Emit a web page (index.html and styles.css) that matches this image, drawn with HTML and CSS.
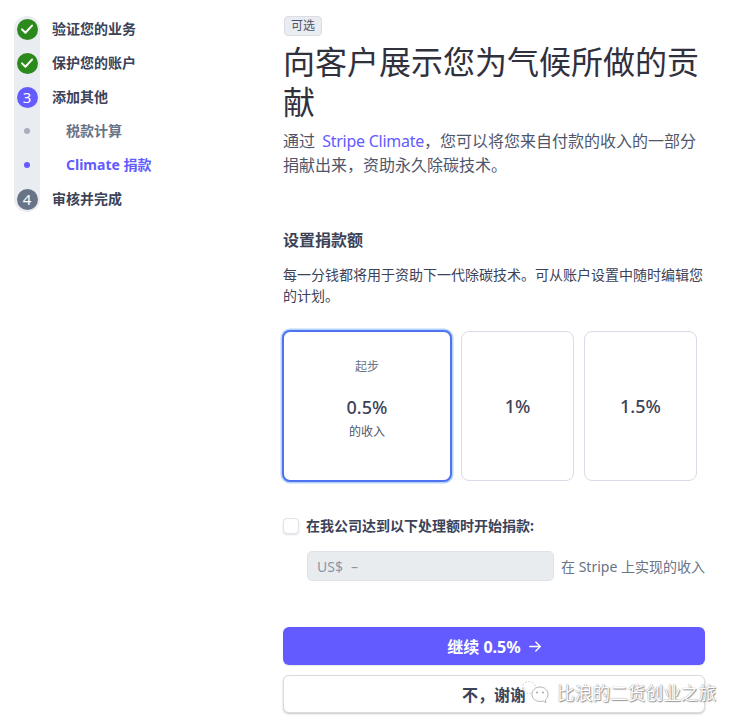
FILE: index.html
```html
<!DOCTYPE html>
<html lang="zh-CN">
<head>
<meta charset="utf-8">
<title>Stripe Climate</title>
<link rel="stylesheet" href="styles.css">
</head>
<body>
<div class="page">
  <nav class="steps">
    <div class="step"><span class="node done"><svg width="14" height="14" viewBox="0 0 14 14"><path d="M2 7.4 5.4 10.8 12 3.6" fill="none" stroke="#fff" stroke-width="2" stroke-linecap="round" stroke-linejoin="round"/></svg></span><span class="label">验证您的业务</span></div>
    <div class="step"><span class="node done"><svg width="14" height="14" viewBox="0 0 14 14"><path d="M2 7.4 5.4 10.8 12 3.6" fill="none" stroke="#fff" stroke-width="2" stroke-linecap="round" stroke-linejoin="round"/></svg></span><span class="label">保护您的账户</span></div>
    <div class="step"><span class="node current">3</span><span class="label">添加其他</span></div>
    <div class="step sub"><span class="node-slot"><span class="dot"></span></span><span class="label muted">税款计算</span></div>
    <div class="step sub"><span class="node-slot"><span class="dot active"></span></span><span class="label accent">Climate 捐款</span></div>
    <div class="step"><span class="node todo">4</span><span class="label">审核并完成</span></div>
  </nav>
  <main class="main">
    <span class="badge">可选</span>
    <h1 class="title">向客户展示您为气候所做的贡献</h1>
    <p class="lead">通过 <a class="link">Stripe Climate</a>，您可以将您来自付款的收入的一部分捐献出来，资助永久除碳技术。</p>
    <h2 class="section">设置捐款额</h2>
    <p class="desc">每一分钱都将用于资助下一代除碳技术。可从账户设置中随时编辑您的计划。</p>
    <div class="cards">
      <div class="card selected">
        <span class="card-top">起步</span>
        <span class="pct">0.5%</span>
        <span class="card-sub">的收入</span>
      </div>
      <div class="card plain"><span class="pct">1%</span></div>
      <div class="card plain"><span class="pct">1.5%</span></div>
    </div>
    <div class="check-row"><span class="checkbox"></span><span class="check-label">在我公司达到以下处理额时开始捐款:</span></div>
    <div class="input-row">
      <div class="input"><span>US$</span><span>–</span></div>
      <span class="input-note">在 Stripe 上实现的收入</span>
    </div>
    <button class="btn primary">继续 0.5% <svg class="arrow" width="12" height="11" viewBox="0 0 12 11"><path d="M.7 5.5H11.3M6.8 1l4.5 4.5L6.8 10" fill="none" stroke="#fff" stroke-width="1.3" stroke-linecap="round" stroke-linejoin="round"/></svg></button>
    <button class="btn secondary">不，谢谢</button>
  </main>
</div>
<div class="watermark">
  <svg width="30" height="24" viewBox="0 0 30 24"><ellipse cx="7" cy="6.5" rx="6.5" ry="6" fill="#fff" fill-opacity=".85" stroke="#cfcfcf" stroke-dasharray="2 1.5"/><path d="M18 6c4.6 0 8 3.2 8 7.3 0 2.2-1 4-2.6 5.3l.6 3-3.200-1.600c-.9.3-1.800.400-2.800.400-4.600 0-8-3.200-8-7.100S13.400 6 18 6Z" fill="#fff" stroke="#b4b4b4"/><circle cx="15" cy="11.500" r=".9" fill="#a0a0a0"/><circle cx="21" cy="11.500" r=".9" fill="#a0a0a0"/></svg>
  <span>比浪的二货创业之旅</span>
</div>
</body>
</html>
```

FILE: styles.css
```css
* { box-sizing: border-box; }
html, body { margin: 0; padding: 0; background: #fff; }
body {
  width: 740px;
  height: 725px;
  overflow: hidden;
  position: relative;
  font-family: "Noto Sans", "Noto Sans CJK SC", sans-serif;
  color: #3c4257;
}
.page { display: flex; align-items: flex-start; padding-left: 14px; }

.steps {
  position: relative;
  width: 269px;
  height: 196px;
  flex: none;
  margin-top: 16px;
  display: flex;
  flex-direction: column;
}
.steps::before {
  content: "";
  position: absolute;
  left: 0;
  top: 0;
  bottom: 0;
  width: 26px;
  border-radius: 13px;
  background: #e9ecf0;
}
.step { position: relative; height: 34px; flex: none; display: flex; align-items: center; }
.step:first-child { margin-top: -4px; }
.node, .node-slot {
  width: 21px;
  height: 21px;
  margin: 0 2.5px;
  flex: none;
  display: flex;
  align-items: center;
  justify-content: center;
}
.node {
  border-radius: 50%;
  color: #fff;
  font-size: 15px;
  line-height: 21px;
}
.done { background: #2c8a1c; }
.current { background: #635bff; }
.todo { background: #697386; }
.dot { width: 6px; height: 6px; border-radius: 50%; background: #a9afc0; }
.dot.active { background: #635bff; }
.label {
  margin-left: 12px;
  font-size: 14px;
  font-weight: 700;
  line-height: 18px;
  color: #3c4257;
  white-space: nowrap;
}
.sub .label { margin-left: 26px; }
.label.muted { color: #697386; }
.label.accent { color: #635bff; }

.main { width: 422px; flex: none; display: flex; flex-direction: column; align-items: flex-start; padding-top: 16px; }
.badge {
  height: 20px;
  margin-left: 1px;
  padding: 0 6px;
  font-size: 12px;
  line-height: 18px;
  color: #4f566b;
  background: #e9ecf0;
  border: 1px solid #dadde4;
  border-radius: 4px;
}
.title {
  margin: 6px 0 0;
  font-size: 32px;
  line-height: 40px;
  font-weight: 400;
  color: #30313d;
  width: 100%;
}
.lead {
  margin: 7px 0 0;
  font-size: 16px;
  line-height: 24px;
  color: #4f566b;
  width: 100%;
}
.link { color: #635bff; margin-left: 3px; letter-spacing: -.25px; }
.section {
  margin: 51px 0 0;
  font-size: 16px;
  line-height: 24px;
  font-weight: 700;
  color: #3c4257;
}
.desc {
  margin: 12px 0 0;
  font-size: 14px;
  line-height: 21px;
  color: #3c4257;
  width: 100%;
}
.cards { display: flex; align-items: flex-start; gap: 10px; margin-top: 25px; }
.card {
  height: 150px;
  border-radius: 8px;
  background: #fff;
  display: flex;
  flex-direction: column;
  align-items: center;
}
.plain {
  width: 113px;
  border: 1px solid #d8dce6;
  justify-content: center;
}
.selected {
  width: 170px;
  height: 152px;
  margin: -1px;
  border: 2px solid #4f73f0;
  box-shadow: 0 0 0 1.5px #b3d4fb;
}
.card-top { margin-top: 26px; font-size: 12px; line-height: 18px; color: #697386; }
.pct { font-size: 18px; font-weight: 500; line-height: 24px; color: #3c4257; }
.selected .pct { margin-top: 19px; }
.card-sub { margin-top: 5px; font-size: 12px; line-height: 16px; color: #4f566b; }

.check-row { display: flex; align-items: center; margin-top: 35px; height: 20px; gap: 7px; }
.checkbox {
  width: 16px;
  height: 16px;
  border-radius: 4px;
  background: #fff;
  border: 1px solid #e0e3ea;
  box-shadow: 0 1px 2px rgba(60, 66, 87, .16);
}
.check-label { font-size: 14px; font-weight: 700; line-height: 20px; color: #3c4257; }
.input-row { display: flex; align-items: center; margin: 15px 0 0 24px; gap: 7px; }
.input {
  width: 247px;
  height: 30px;
  background: #e9ecef;
  border: 1px solid #dfe2e8;
  border-radius: 5px;
  padding: 0 9px;
  display: flex;
  align-items: center;
  gap: 8px;
  font-size: 14px;
  color: #8c94a5;
}
.input-note { font-size: 14px; color: #697386; white-space: nowrap; }

.btn {
  width: 422px;
  height: 38px;
  flex: none;
  border-radius: 6px;
  font-family: inherit;
  font-size: 16px;
  font-weight: 700;
  padding: 0;
  display: flex;
  align-items: center;
  justify-content: center;
  gap: 8px;
}
.primary {
  margin-top: 46px;
  background: #635bff;
  color: #fff;
  border: none;
  box-shadow: 0 1px 1px rgba(60, 66, 87, .12);
}
.secondary {
  margin-top: 10px;
  background: #fff;
  color: #3c4257;
  border: 1px solid #dcdcdc;
  box-shadow: 0 1px 2px rgba(60, 66, 87, .3);
}

.watermark {
  position: absolute;
  left: 522px;
  top: 680px;
  display: flex;
  align-items: center;
  gap: 5px;
  font-size: 17.7px;
  line-height: 26px;
  color: #fff;
  text-shadow: 0 0 1px #777, 1px 1px 1px #999;
  white-space: nowrap;
}
```
